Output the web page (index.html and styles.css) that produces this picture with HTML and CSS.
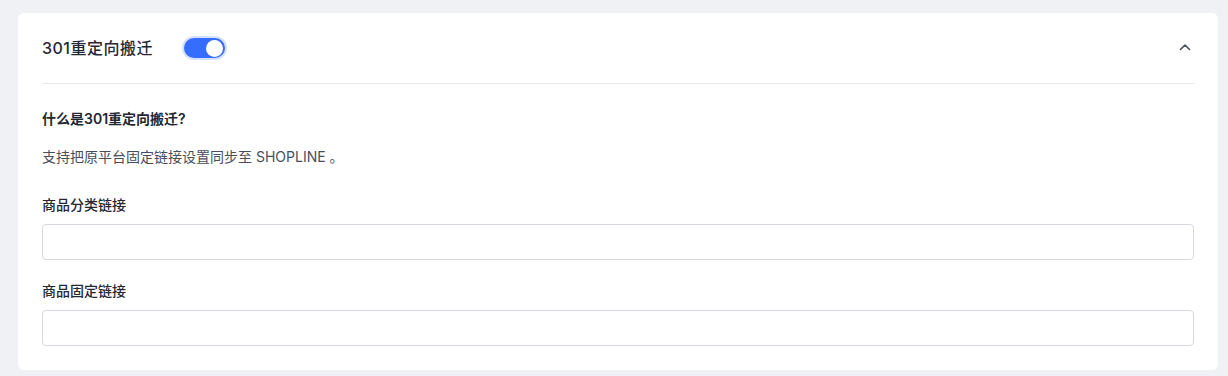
FILE: index.html
```html
<!DOCTYPE html>
<html lang="zh">
<head>
<meta charset="utf-8">
<link rel="stylesheet" href="styles.css">
</head>
<body>
<div class="page">
  <section class="card">
    <header class="card-header">
      <div class="title-group">
        <h2 class="title">301重定向搬迁</h2>
        <span class="switch"><span class="knob"></span></span>
      </div>
      <svg class="chevron" width="12" height="8" viewBox="0 0 12 8" aria-hidden="true">
        <path d="M1.5 6.5 L6 2 L10.5 6.5" fill="none" stroke="#474f5e" stroke-width="1.6" stroke-linecap="round" stroke-linejoin="round"/>
      </svg>
    </header>
    <div class="card-body">
      <p class="question">什么是301重定向搬迁?</p>
      <p class="desc">支持把原平台固定链接设置同步至 SHOPLINE 。</p>
      <div class="field">
        <label class="label">商品分类链接</label>
        <input class="input" type="text">
      </div>
      <div class="field">
        <label class="label">商品固定链接</label>
        <input class="input" type="text">
      </div>
    </div>
  </section>
</div>
</body>
</html>
```

FILE: styles.css
```css
* { box-sizing: border-box; }
html, body { margin: 0; padding: 0; }
body {
  background: #f0f1f5;
  font-family: Inter, "Noto Sans CJK SC", sans-serif;
  color: #242833;
}
.page {
  padding: 13px 10px 6px 18px;
}
.card {
  width: 1200px;
  background: #fff;
  border-radius: 6px;
  padding: 0 24px 24px;
}
.card-header {
  height: 71px;
  display: flex;
  align-items: center;
  justify-content: space-between;
  border-bottom: 1px solid #e8e9ed;
}
.title-group {
  display: flex;
  align-items: center;
  gap: 31px;
}
.title {
  margin: 0;
  font-size: 16px;
  font-weight: 500;
  line-height: 24px;
  letter-spacing: 0.5px;
  color: #242833;
}
.switch {
  width: 41px;
  height: 20px;
  border-radius: 10px;
  background: #356dff;
  box-shadow: 0 0 0 2px #d5e0ff;
  display: flex;
  align-items: center;
  justify-content: flex-end;
  padding: 0 2px;
}
.knob {
  width: 17px;
  height: 17px;
  border-radius: 50%;
  background: #fff;
}
.chevron {
  margin-right: 3px;
  margin-top: -2px;
}
.card-body {
  padding-top: 24px;
}
.question {
  margin: 0;
  font-size: 14px;
  font-weight: 600;
  line-height: 22px;
  color: #242833;
}
.desc {
  margin: 16px 0 0;
  font-size: 14px;
  line-height: 22px;
  color: #474f5e;
}
.field {
  display: flex;
  flex-direction: column;
  gap: 8px;
  margin-top: 26px;
}
.field + .field { margin-top: 20px; }
.label {
  font-size: 14px;
  font-weight: 500;
  line-height: 22px;
  color: #242833;
}
.input {
  height: 36px;
  width: 100%;
  border: 1px solid #d7d9e1;
  border-radius: 4px;
  background: #fff;
  outline: none;
  font: inherit;
  padding: 0 12px;
}
```
